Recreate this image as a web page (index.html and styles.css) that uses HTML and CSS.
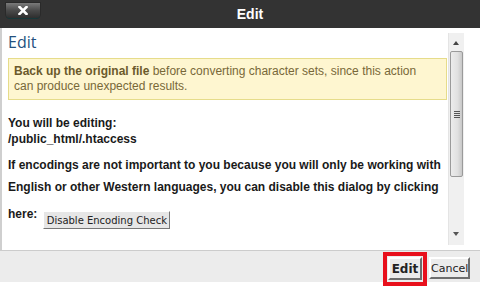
FILE: index.html
```html
<!DOCTYPE html>
<html>
<head>
<meta charset="utf-8">
<link rel="stylesheet" href="styles.css">
</head>
<body>
<div class="dialog">
  <div class="titlebar">
    <div class="close"><svg width="10" height="9" viewBox="0 0 10 9"><path d="M1.5 1 L8.5 8 M8.5 1 L1.5 8" stroke="#fff" stroke-width="2.6" stroke-linecap="square"/></svg></div>
    <div class="title">Edit</div>
  </div>
  <div class="main">
    <div class="content">
      <h1 class="heading">Edit</h1>
      <div class="warn"><b>Back up the original file</b> before converting character sets, since this action can produce unexpected results.</div>
      <p class="editing">You will be editing:<br>/public_html/.htaccess</p>
      <p class="info">If encodings are not important to you because you will only be working with English or other Western languages, you can disable this dialog by clicking here: <button class="small-btn">Disable Encoding Check</button></p>
    </div>
    <div class="scroll">
      <div class="arrow up"></div>
      <div class="thumb"><div class="grip"></div></div>
      <div class="track"></div>
      <div class="arrow down"></div>
    </div>
  </div>
  <div class="footer">
    <div class="highlight"><button class="btn primary">Edit</button></div>
    <button class="btn cancel">Cancel</button>
  </div>
</div>
</body>
</html>
```

FILE: styles.css
```css
html, body { margin: 0; padding: 0; background: #fff; }
body { width: 480px; height: 286px; overflow: hidden; font-family: "Liberation Sans", Arial, sans-serif; }
.dialog { display: flex; flex-direction: column; height: 286px; }
.titlebar { height: 28px; background: #333333; display: flex; align-items: flex-start; flex: none; }
.close { width: 34px; height: 15px; margin: 3px 0 0 6px; background: linear-gradient(#7a7a7a, #4a4a4a 50%, #2e2e2e); border-radius: 0 0 4px 4px; box-shadow: 0 1px 0 #17383a, 0 0 0 1px #2a2a2a; display: flex; justify-content: center; align-items: center; }
.close svg { display: block; }
.title { flex: 1; text-align: center; color: #fff; font-weight: bold; font-size: 14px; line-height: 28px; padding-right: 20px; font-family: "Liberation Sans", Arial, sans-serif; }
.main { height: 222px; border-left: 2px solid #cfcfcf; display: flex; flex: none; }
.content { flex: 1; padding: 0 0 0 6px; }
.heading { margin: 0; padding-top: 2px; font-family: "Open Sans", sans-serif; font-weight: normal; font-size: 16px; line-height: 24px; color: #24507e; }
.warn { margin-top: 4px; background: #fef6d0; border: 1px solid #e6dc8a; color: #786838; font-size: 12px; line-height: 15px; padding: 5px 28px 5px 5px; }
.warn b { color: #6b5a2c; }
.editing { margin: 15px 0 0 0; font-weight: bold; font-size: 12px; line-height: 16px; color: #1a1a1a; }
.info { margin: 7px 0 0 0; font-weight: bold; font-size: 12px; line-height: 22px; color: #1a1a1a; }
.small-btn { font-family: "DejaVu Sans", Verdana, sans-serif; font-size: 10px; color: #222; background: #e6e6e6; border: 1px solid; border-color: #fff #777 #777 #fff; padding: 3px 2px 2px 3px; vertical-align: -6px; margin: 13px 0 0 2px; }
.scroll { width: 15px; margin: 5px 16px 5px 1px; background: #f0f0f0; border-left: 1px solid #e4e4e4; display: flex; flex-direction: column; align-items: center; }
.arrow { width: 15px; height: 18px; position: relative; flex: none; }
.arrow::after { content: ""; position: absolute; left: 4px; border-left: 3px solid transparent; border-right: 3px solid transparent; }
.up::after { top: 8px; border-bottom: 4px solid #444; }
.down::after { top: 5px; border-top: 4px solid #555; }
.thumb { width: 13px; height: 126px; flex: none; border: 1px solid #9a9a9a; border-radius: 2px; box-sizing: border-box; background: linear-gradient(90deg, #ececec, #e0e0e0 60%, #c8c8c8); display: flex; justify-content: center; align-items: center; }
.grip { width: 6px; height: 7px; background: repeating-linear-gradient(#555 0 1px, transparent 1px 2px); }
.track { flex: 1; }
.footer { height: 31px; flex: none; border-top: 1px solid #cccccc; background: #ececec; display: flex; justify-content: flex-end; align-items: flex-start; padding-right: 10px; }
.highlight { margin-top: 1px; border: 4px solid #e8101c; height: 34px; box-sizing: border-box; display: flex; align-items: flex-start; }
.btn { font-family: "DejaVu Sans", Verdana, sans-serif; font-size: 12px; color: #222; background: #ebebeb; border: 2px solid; border-color: #fff #6d6d6d #6d6d6d #fff; height: 23px; padding: 0; margin: 1px; box-sizing: border-box; }
.primary { font-weight: bold; width: 34px; }
.cancel { margin: 6px 0 0 2px; height: 22px; width: 41px; font-size: 11px; }
```
